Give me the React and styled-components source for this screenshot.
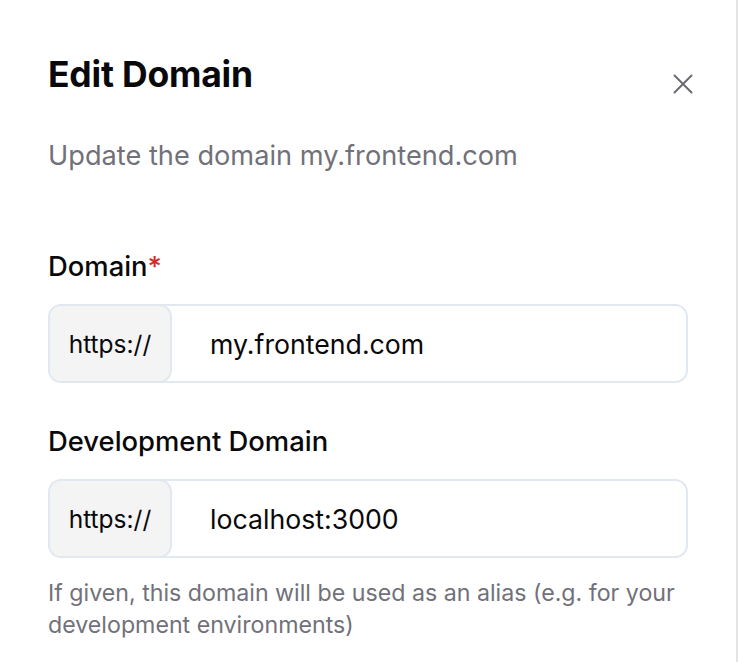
import React from 'react'
import styled, { createGlobalStyle } from 'styled-components'

const GlobalStyle = createGlobalStyle`
  html, body {
    margin: 0;
    padding: 0;
    background: #ffffff;
  }
  body {
    font-family: Inter, "Noto Sans", sans-serif;
    color: #09090b;
  }
`

const Panel = styled.div`
  box-sizing: border-box;
  width: 738px;
  min-height: 662px;
  padding: 55px 48px 0 48px;
  border-right: 2px solid #e4e4e7;
  display: flex;
  flex-direction: column;
`

const Header = styled.div`
  display: flex;
  justify-content: space-between;
  align-items: flex-start;
`

const Title = styled.h2`
  margin: 0;
  font-size: 35.5px;
  line-height: 40px;
  font-weight: 700;
  letter-spacing: -0.2px;
`

const CloseButton = styled.button`
  margin: 19px -5px 0 0;
  padding: 0;
  border: none;
  background: transparent;
  width: 20px;
  height: 20px;
  display: flex;
  color: #6b6b73;
  cursor: pointer;
`

const Subtitle = styled.p`
  margin: 43px 0 0;
  font-size: 27.2px;
  line-height: 36px;
  color: #71717a;
`

const Field = styled.div`
  display: flex;
  flex-direction: column;
  margin-top: ${(p) => p.$top}px;
`

const Label = styled.label`
  font-size: 27.4px;
  line-height: 36px;
  font-weight: 500;
  margin-bottom: 20px;
`

const Required = styled.span`
  color: #dc2626;
`

const InputGroup = styled.div`
  box-sizing: border-box;
  display: flex;
  height: 79px;
  border: 2px solid #e2e8f0;
  border-radius: 13px;
  overflow: hidden;
`

const Prefix = styled.span`
  box-sizing: border-box;
  flex: 0 0 124px;
  margin: -2px 0 -2px -2px;
  display: flex;
  align-items: center;
  justify-content: center;
  background: #f4f4f5;
  border: 2px solid #e2e8f0;
  border-radius: 13px;
  font-size: 24.5px;
  color: #09090b;
`

const Input = styled.input`
  flex: 1;
  min-width: 0;
  border: none;
  outline: none;
  background: transparent;
  padding: 0 0 0 38px;
  font-family: inherit;
  font-size: 26.7px;
  color: #09090b;
`

const Help = styled.p`
  margin: 19px 0 0;
  font-size: 23.2px;
  line-height: 32px;
  color: #71717a;
`

const DomainInput = ({ value }) => (
  <InputGroup>
    <Prefix>https://</Prefix>
    <Input defaultValue={value} />
  </InputGroup>
)

export default function App() {
  return (
    <>
      <GlobalStyle />
      <Panel>
        <Header>
          <Title>Edit Domain</Title>
          <CloseButton aria-label="Close">
            <svg width="20" height="20" viewBox="0 0 20 20" fill="none" stroke="currentColor" strokeWidth="2" strokeLinecap="round">
              <path d="M1.5 1.5l17 17M18.5 1.5l-17 17" />
            </svg>
          </CloseButton>
        </Header>
        <Subtitle>Update the domain my.frontend.com</Subtitle>
        <Field $top={74}>
          <Label>Domain<Required>*</Required></Label>
          <DomainInput value="my.frontend.com" />
        </Field>
        <Field $top={40}>
          <Label>Development Domain</Label>
          <DomainInput value="localhost:3000" />
        </Field>
        <Help>If given, this domain will be used as an alias (e.g. for your development environments)</Help>
      </Panel>
    </>
  )
}
